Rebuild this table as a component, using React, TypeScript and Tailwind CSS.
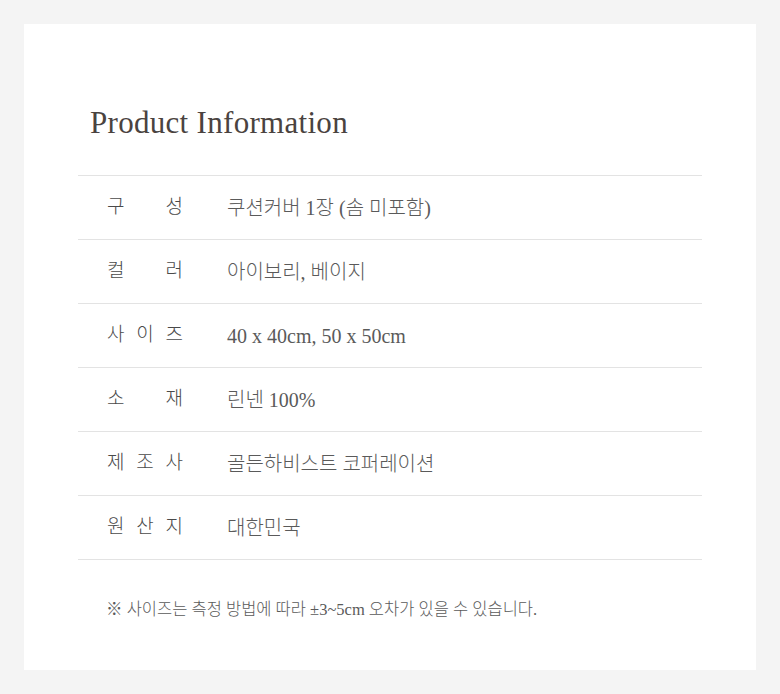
import React from "react";

const rows = [
  { label: "구성", value: "쿠션커버 1장 (솜 미포함)" },
  { label: "컬러", value: "아이보리, 베이지" },
  { label: "사이즈", value: "40 x 40cm, 50 x 50cm" },
  { label: "소재", value: "린넨 100%" },
  { label: "제조사", value: "골든하비스트 코퍼레이션" },
  { label: "원산지", value: "대한민국" },
];

const font = "font-['Liberation_Serif','Noto_Sans_CJK_KR',serif]";

const App = () => {
  return (
    <div className="min-h-screen bg-[#f4f4f4] p-6">
      <div className={`bg-white h-[646px] px-[54px] pt-[81px] ${font}`}>
        <h2 className="pl-3 text-[31px] leading-[36px] tracking-[0.3px] text-[#4a4340] font-normal">
          Product Information
        </h2>

        <div className="mt-[34px] border-t border-[#e3e3e3]">
          {rows.map((row) => (
            <div
              key={row.label}
              className="flex items-center h-[64px] border-b border-[#e3e3e3] pl-[29px]"
            >
              <div className="w-[76px] text-[19px] font-light text-[#4a4a4a] [text-align-last:justify]">
                {row.label.split("").join(" ")}
              </div>
              <div className="ml-[44px] text-[20px] font-light text-[#5a5a5a]">
                {row.value}
              </div>
            </div>
          ))}
        </div>

        <p className="mt-[38px] pl-[28px] text-[16.5px] font-light text-[#5a5a5a]">
          ※ 사이즈는 측정 방법에 따라 ±3~5cm 오차가 있을 수 있습니다.
        </p>
      </div>
    </div>
  );
};

export default App;
